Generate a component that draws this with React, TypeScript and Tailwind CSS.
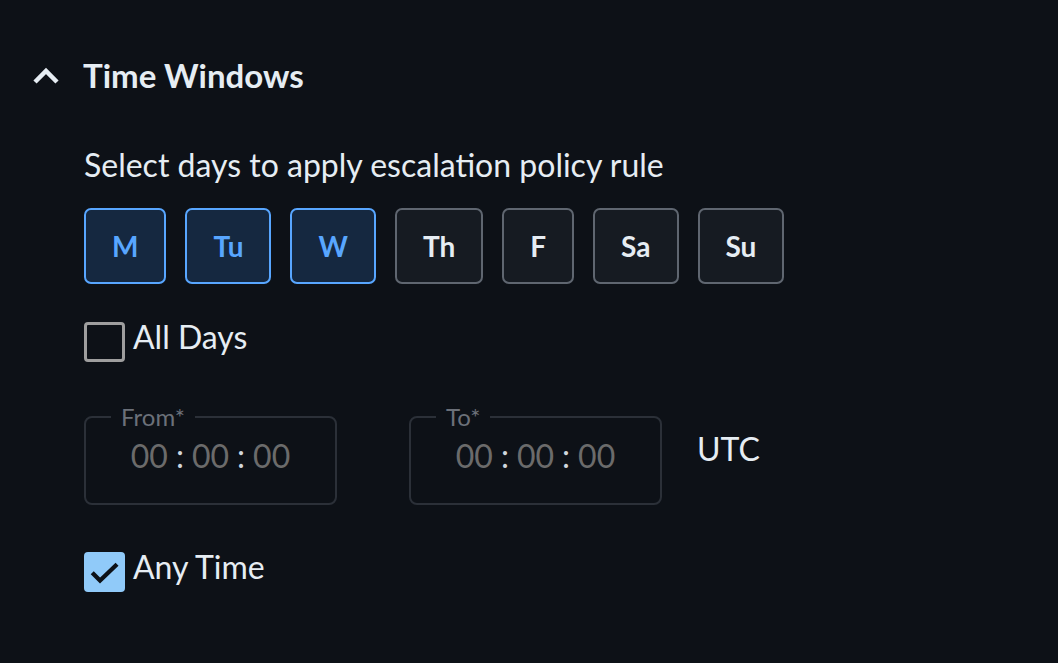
import React, { useState } from 'react';

const DAYS = ['M', 'Tu', 'W', 'Th', 'F', 'Sa', 'Su'];

function TimeField({ label }: { label: string }) {
  return (
    <fieldset className="w-[253px] h-[100px] border-2 border-[#2b3038] rounded-[8px]">
      <legend className="ml-[25px] px-[10px] text-[24px] leading-[24px] text-[#6b7079]">
        {label}*
      </legend>
      <div className="flex items-center justify-center gap-[8px] text-[32px] leading-none text-[#6b6b6b] mt-[11px]">
        <span>00</span>
        <span className="text-[#d0d6dd]">:</span>
        <span>00</span>
        <span className="text-[#d0d6dd]">:</span>
        <span>00</span>
      </div>
    </fieldset>
  );
}

function Checkbox({ checked, label }: { checked: boolean; label: string }) {
  return (
    <label className="flex items-center gap-[8px] cursor-pointer">
      {checked ? (
        <span className="w-[41px] h-[40px] rounded-[4px] bg-[#90caf9] flex items-center justify-center">
          <svg width="34" height="34" viewBox="0 0 24 24" fill="none" stroke="#0d1117" strokeWidth="3">
            <path d="M3 12.5l5.5 5.5L20.5 6.5" />
          </svg>
        </span>
      ) : (
        <span className="w-[41px] h-[40px] rounded-[4px] border-[3px] border-[#9e9e9e]" />
      )}
      <span className="text-[32px] leading-[40px] -mt-[10px] text-[#e6edf3]">{label}</span>
    </label>
  );
}

export default function App() {
  const [selected] = useState(['M', 'Tu', 'W']);
  return (
    <div className="min-h-screen w-full bg-[#0d1117] font-['Lato',sans-serif] text-[#e6edf3]">
      <div className="pt-[56px] pl-[33px] flex items-center gap-[24px]">
        <svg width="26" height="18" viewBox="0 0 26 18" fill="none" stroke="#e6edf3" strokeWidth="4.5">
          <path d="M2 16L13 5l11 11" />
        </svg>
        <h2 className="text-[33px] font-bold leading-[38px]">Time Windows</h2>
      </div>

      <div className="pl-[84px] pt-[51px]">
        <p className="text-[32px] leading-[40px]">Select days to apply escalation policy rule</p>

        <div className="flex gap-[19px] mt-[23px]">
          {DAYS.map((d) => {
            const on = selected.includes(d);
            return (
              <button
                key={d}
                className={
                  on
                    ? 'h-[76px] px-[26px] rounded-[7px] border-2 border-[#58a6ff] bg-[#152840] text-[#58a6ff] text-[28px] leading-none font-bold'
                    : 'h-[76px] px-[26px] rounded-[7px] border-2 border-[#5f6670] bg-[#161b22] text-[#e6edf3] text-[28px] leading-none font-bold'
                }
              >
                {d}
              </button>
            );
          })}
        </div>

        <div className="mt-[38px]">
          <Checkbox checked={false} label="All Days" />
        </div>

        <div className="flex items-center gap-[72px] mt-[43px]">
          <TimeField label="From" />
          <div className="flex items-center gap-[35px]">
            <TimeField label="To" />
            <span className="text-[32px] leading-[40px] -mt-[13px]">UTC</span>
          </div>
        </div>

        <div className="mt-[47px]">
          <Checkbox checked label="Any Time" />
        </div>
      </div>
    </div>
  );
}
